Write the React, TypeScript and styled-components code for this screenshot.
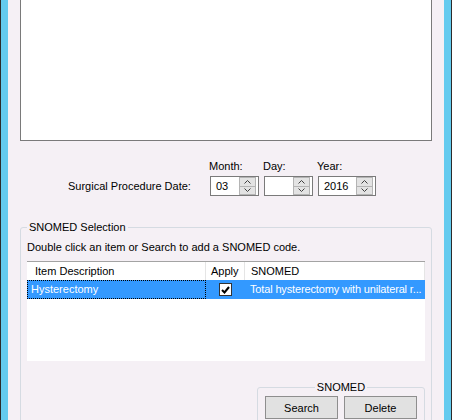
import styled, { createGlobalStyle } from "styled-components";

const GlobalStyle = createGlobalStyle`
  html, body {
    margin: 0;
    padding: 0;
  }
  body {
    font-family: "Liberation Sans", Arial, sans-serif;
    font-size: 11px;
    color: #000;
  }
`;

const Frame = styled.div`
  width: 452px;
  height: 420px;
  box-sizing: border-box;
  display: flex;
  overflow: hidden;
  background: #64cbef;
  border-left: 1px solid #2b2b2b;
  border-right: 1px solid #2b2b2b;
  padding: 0 7px;
`;

const Client = styled.div`
  flex: 1;
  display: flex;
  flex-direction: column;
  background: #f5f0f5;
  padding: 0 12px;
  & > * {
    flex-shrink: 0;
  }
`;

const NotesBox = styled.div`
  height: 141px;
  box-sizing: border-box;
  background: #fff;
  border: 1px solid #7a7a7a;
  border-top: none;
`;

const DateRow = styled.div`
  display: flex;
  align-items: flex-end;
  margin-top: 19px;
  padding-left: 48px;
`;

const DateLabel = styled.div`
  width: 142px;
  height: 20px;
  line-height: 20px;
`;

const DateField = styled.div`
  display: flex;
  flex-direction: column;
  gap: 3px;
  margin-right: 5px;
`;

const FieldLabel = styled.div`
  line-height: 13px;
  margin-left: -1px;
`;

const SpinBox = styled.div<{ $width: number }>`
  width: ${p => p.$width}px;
  height: 20px;
  box-sizing: border-box;
  display: flex;
  align-items: stretch;
  background: #fff;
  border: 1px solid #7a7a7a;
  padding: 0 2px 0 5px;
`;

const SpinValue = styled.div`
  flex: 1;
  line-height: 18px;
`;

const SpinButtons = styled.div`
  width: 17px;
  display: flex;
  flex-direction: column;
`;

const SpinButton = styled.div`
  flex: 1;
  display: flex;
  align-items: center;
  justify-content: center;
  background: #e3e3e3;
  border: 1px solid #b4b4b4;
  & + & {
    border-top: none;
  }
`;

const GroupBox = styled.fieldset`
  margin: 25px 0 0;
  padding: 7px 6px 20px;
  border: 1px solid #d5dbe2;
  border-radius: 3px;
  min-width: 0;
  display: flex;
  flex-direction: column;
  & > * {
    flex-shrink: 0;
  }
`;

const GroupTitle = styled.legend<{ $center?: boolean }>`
  padding: 0 2px;
  line-height: 13px;
  margin: ${p => (p.$center ? "0 auto" : "0")};
`;

const Hint = styled.div`
  line-height: 13px;
`;

const List = styled.div`
  margin-top: 7px;
  height: 99px;
  background: #fff;
  border-top: 1px solid #a3a3a3;
`;

const Columns = styled.div`
  display: grid;
  grid-template-columns: 179px 39px 180px;
`;

const HeaderRow = styled(Columns)`
  height: 18px;
  line-height: 18px;
`;

const HeaderCell = styled.div<{ $pad: number }>`
  padding-left: ${p => p.$pad}px;
  border-right: 1px solid #e5e5e5;
  white-space: nowrap;
  overflow: hidden;
`;

const ItemRow = styled(Columns)`
  height: 19px;
  line-height: 17px;
  background: #3399ff;
  color: #fff;
`;

const FocusCell = styled.div`
  box-sizing: border-box;
  border: 1px dotted #000;
  padding-left: 3px;
`;

const CheckCell = styled.div`
  display: flex;
  align-items: center;
  justify-content: center;
`;

const TextCell = styled.div`
  padding-left: 5px;
  line-height: 19px;
  letter-spacing: -0.15px;
  white-space: nowrap;
`;

const CheckBox = styled.div`
  width: 13px;
  height: 13px;
  box-sizing: border-box;
  background: #fff;
  border: 1px solid #333;
  display: flex;
  align-items: center;
  justify-content: center;
`;

const ActionBox = styled(GroupBox)`
  align-self: flex-end;
  width: 168px;
  box-sizing: border-box;
  margin-top: 20px;
  padding: 2px 7px 6px;
  flex-direction: row;
  gap: 6px;
`;

const Button = styled.button`
  width: 73px;
  height: 23px;
  padding: 0;
  font: inherit;
  color: #000;
  background: #e1e1e1;
  border: 1px solid #8e8e8e;
  border-radius: 0;
`;

const Chevron = ({ up }: { up?: boolean }) => (
  <svg width="7" height="4" viewBox="0 0 7 4">
    <polyline
      points={up ? "0.5,3.5 3.5,0.5 6.5,3.5" : "0.5,0.5 3.5,3.5 6.5,0.5"}
      fill="none"
      stroke="#404040"
      strokeWidth="1"
    />
  </svg>
);

const Spinner = ({ value, width }: { value: string; width: number }) => (
  <SpinBox $width={width}>
    <SpinValue>{value}</SpinValue>
    <SpinButtons>
      <SpinButton><Chevron up /></SpinButton>
      <SpinButton><Chevron /></SpinButton>
    </SpinButtons>
  </SpinBox>
);

const App = () => {
  return (
    <Frame>
      <GlobalStyle />
      <Client>
        <NotesBox />
        <DateRow>
          <DateLabel>Surgical Procedure Date:</DateLabel>
          <DateField>
            <FieldLabel>Month:</FieldLabel>
            <Spinner value="03" width={49} />
          </DateField>
          <DateField>
            <FieldLabel>Day:</FieldLabel>
            <Spinner value="" width={49} />
          </DateField>
          <DateField>
            <FieldLabel>Year:</FieldLabel>
            <Spinner value="2016" width={58} />
          </DateField>
        </DateRow>
        <GroupBox>
          <GroupTitle>SNOMED Selection</GroupTitle>
          <Hint>Double click an item or Search to add a SNOMED code.</Hint>
          <List>
            <HeaderRow>
              <HeaderCell $pad={8}>Item Description</HeaderCell>
              <HeaderCell $pad={5}>Apply</HeaderCell>
              <HeaderCell $pad={6}>SNOMED</HeaderCell>
            </HeaderRow>
            <ItemRow>
              <FocusCell>Hysterectomy</FocusCell>
              <CheckCell>
                <CheckBox>
                  <svg width="9" height="8" viewBox="0 0 9 8">
                    <polyline points="1,4 3.5,6.5 8,1" fill="none" stroke="#000" strokeWidth="2" />
                  </svg>
                </CheckBox>
              </CheckCell>
              <TextCell>Total hysterectomy with unilateral r...</TextCell>
            </ItemRow>
          </List>
          <ActionBox>
            <GroupTitle $center>SNOMED</GroupTitle>
            <Button>Search</Button>
            <Button>Delete</Button>
          </ActionBox>
        </GroupBox>
      </Client>
    </Frame>
  );
};

export default App;
